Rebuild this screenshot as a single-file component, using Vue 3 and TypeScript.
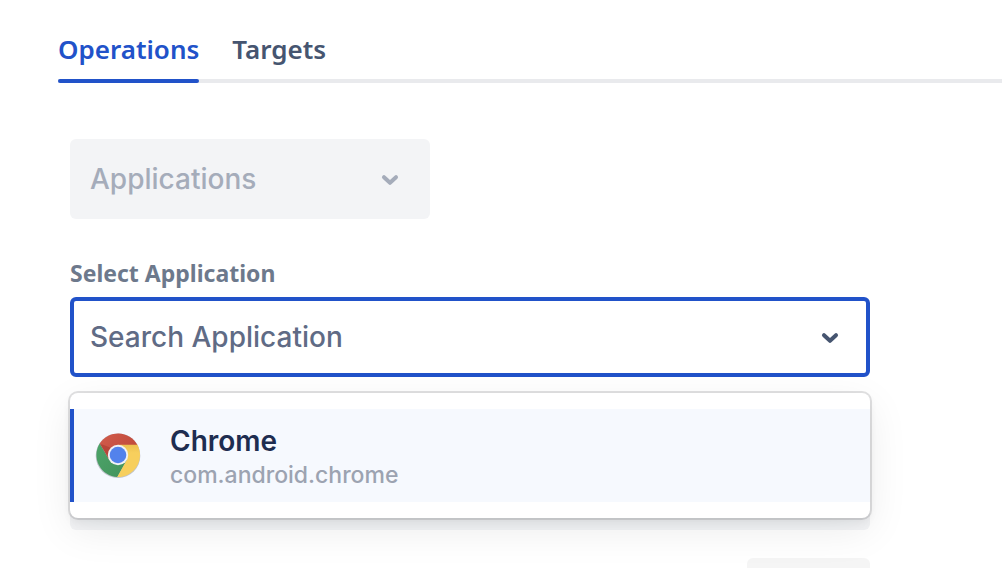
<script setup lang="ts">
import { ref } from 'vue'

interface AppOption {
  name: string
  packageId: string
}

const tabs: string[] = ['Operations', 'Targets']
const activeTab = ref('Operations')
const query = ref('')
const options: AppOption[] = [{ name: 'Chrome', packageId: 'com.android.chrome' }]
const highlighted = ref(0)
</script>

<template>
  <main class="page">
    <nav class="tabs" role="tablist">
      <button
        v-for="tab in tabs"
        :key="tab"
        class="tab"
        :class="{ active: tab === activeTab }"
        type="button"
        role="tab"
        :aria-selected="tab === activeTab"
        @click="activeTab = tab"
      >{{ tab }}</button>
    </nav>

    <form class="form" @submit.prevent>
      <div class="control category">
        <select class="field muted" aria-label="Category" disabled>
          <option>Applications</option>
        </select>
        <svg class="chevron pale" viewBox="0 0 20 14" aria-hidden="true"><path d="M4 4.2 L10 9.8 L16 4.2" /></svg>
      </div>

      <label class="label" for="application">Select Application</label>
      <div class="control">
        <input
          id="application"
          v-model="query"
          class="field search"
          type="text"
          role="combobox"
          aria-expanded="true"
          aria-controls="application-list"
          placeholder="Search Application"
          autocomplete="off"
        />
        <svg class="chevron" viewBox="0 0 20 14" aria-hidden="true"><path d="M4 4.2 L10 9.8 L16 4.2" /></svg>

        <ul id="application-list" class="menu" role="listbox">
          <li
            v-for="(option, index) in options"
            :key="option.packageId"
            class="option"
            :class="{ highlighted: index === highlighted }"
            role="option"
            :aria-selected="index === highlighted"
          >
            <svg class="logo" viewBox="0 0 48 48" aria-hidden="true">
              <defs>
                <linearGradient id="red-shade" x1="0" y1="0" x2="1" y2="0.4">
                  <stop offset="0" stop-color="#d25c4c" />
                  <stop offset="1" stop-color="#c14b3c" />
                </linearGradient>
                <linearGradient id="green-shade" x1="0" y1="0" x2="1" y2="1">
                  <stop offset="0" stop-color="#4ca469" />
                  <stop offset="1" stop-color="#43935c" />
                </linearGradient>
                <linearGradient id="yellow-shade" x1="0" y1="0" x2="0" y2="1">
                  <stop offset="0" stop-color="#ecc04f" />
                  <stop offset="0.25" stop-color="#f7cf5d" />
                </linearGradient>
              </defs>
              <circle cx="24" cy="24.7" r="22.3" fill="#8f969f" opacity="0.55" />
              <path d="M24 24 L5.7 12.5 A22 22 0 0 1 43.3 13.8 L34 20Z" fill="url(#red-shade)" />
              <path d="M5.7 12.5 A22 22 0 0 0 23.3 46 L33 29 L24 24 L15.4 29Z" fill="url(#green-shade)" />
              <path d="M24 13.8 H43.5 A22 22 0 0 1 23.3 46 L32.7 29Z" fill="url(#yellow-shade)" />
              <path d="M5.7 12.5 L15.4 29 L20 18Z" fill="#b84639" />
              <circle cx="24" cy="24" r="10.2" fill="#f1f2f4" />
              <circle cx="24" cy="24" r="8.3" fill="#5382ec" />
            </svg>
            <span class="details">
              <span class="name">{{ option.name }}</span>
              <span class="package">{{ option.packageId }}</span>
            </span>
          </li>
        </ul>
      </div>

      <input class="field muted covered" type="text" aria-label="Version" disabled />
      <button class="submit" type="submit" aria-label="Add" disabled></button>
    </form>
  </main>
</template>

<style>
body {
  background: #fff;
}
</style>

<style scoped>
.page {
  box-sizing: border-box;
  height: 100vh;
  overflow: hidden;
  padding: 20px 0 0 58px;
  font-family: Inter, "Liberation Sans", sans-serif;
  color: #465570;
}

.tabs {
  display: flex;
  gap: 33px;
  box-shadow: inset 0 -4px #e9eaed;
}

.tab {
  position: relative;
  height: 63px;
  padding: 0 0 4px;
  border: 0;
  background: none;
  color: #465570;
  font: 600 26px/59px "Noto Sans", sans-serif;
  cursor: pointer;
}

.tab.active {
  color: #2152c9;
}

.tab.active::after {
  content: "";
  position: absolute;
  inset: auto 0 0;
  height: 4px;
  border-radius: 2px;
  background: #2152c9;
}

.form {
  display: flex;
  flex-direction: column;
  max-width: 800px;
  margin: 56px 20px 0 12px;
}

.control {
  position: relative;
}

.category {
  width: 45%;
}

.field {
  box-sizing: border-box;
  display: block;
  width: 100%;
  height: 80px;
  margin: 0;
  padding: 0 72px 0 20px;
  border: 0;
  border-radius: 6px;
  outline: 0;
  appearance: none;
  font: 500 28px/36px Inter, "Liberation Sans", sans-serif;
}

.muted {
  background: #f3f4f6;
  color: #a5acba;
  opacity: 1;
}

.search {
  padding-left: 16px;
  border: 4px solid #2152c9;
  background: #fff;
  color: #606b85;
}

.search::placeholder {
  color: #606b85;
  opacity: 1;
}

.chevron {
  position: absolute;
  top: 34px;
  right: 30px;
  width: 20px;
  height: 14px;
  fill: none;
  stroke: #465570;
  stroke-width: 4;
  stroke-linecap: round;
  stroke-linejoin: round;
  pointer-events: none;
}

.pale {
  stroke: #a5acba;
}

.label {
  margin: 38px 0 8px;
  color: #6d798c;
  font: 700 23px/32px "Noto Sans", sans-serif;
}

.menu {
  position: absolute;
  top: 96px;
  left: 0;
  right: 0;
  z-index: 1;
  margin: 0;
  padding: 16px 0;
  border-radius: 8px;
  background: #fff;
  box-shadow: 0 0 0 2px rgba(17, 20, 24, 0.12), 0 4px 8px rgba(17, 20, 24, 0.06), 0 12px 40px rgba(17, 20, 24, 0.08);
  list-style: none;
}

.option {
  display: flex;
  align-items: center;
  gap: 28px;
  padding: 12px 20px 13px;
  border-left: 4px solid transparent;
}

.highlighted {
  border-left-color: #2152c9;
  background: #f6f9fe;
}

.logo {
  width: 48px;
  height: 48px;
}

.details {
  display: flex;
  flex-direction: column;
}

.name {
  color: #1e2d50;
  font-size: 28px;
  font-weight: 600;
  line-height: 40px;
}

.package {
  color: #9ca3b1;
  font-size: 23px;
  font-weight: 500;
  line-height: 28px;
}

.covered {
  margin-top: 73px;
}

.submit {
  align-self: flex-end;
  width: 123px;
  height: 80px;
  margin-top: 28px;
  border: 0;
  border-radius: 6px;
  background: #f5f5f5;
}
</style>
